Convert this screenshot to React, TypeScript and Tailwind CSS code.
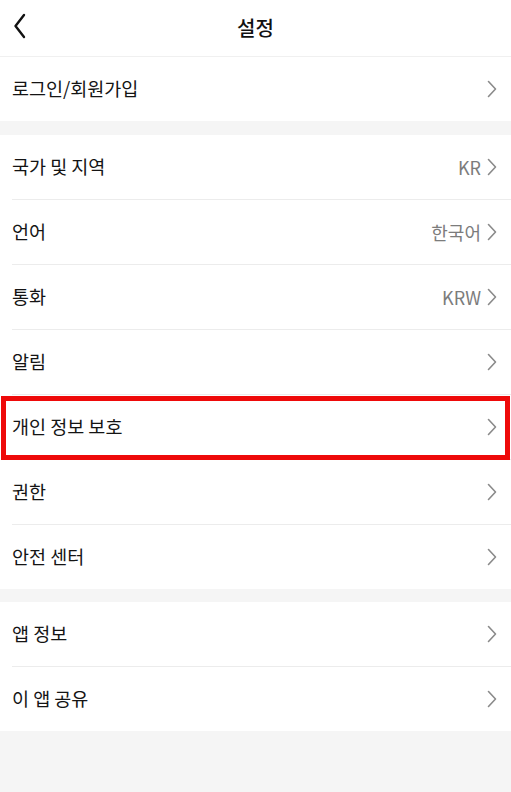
import React from "react"

type Item = { label: string; value?: string; highlight?: boolean }

const groupOne: Item[] = [{ label: "로그인/회원가입" }]
const groupTwo: Item[] = [
  { label: "국가 및 지역", value: "KR" },
  { label: "언어", value: "한국어" },
  { label: "통화", value: "KRW" },
  { label: "알림" },
  { label: "개인 정보 보호", highlight: true },
  { label: "권한" },
  { label: "안전 센터" },
]
const groupThree: Item[] = [{ label: "앱 정보" }, { label: "이 앱 공유" }]

function Chevron() {
  return (
    <svg width="10" height="18" viewBox="0 0 10 18" fill="none" className="shrink-0">
      <path d="M1.5 1.5 L8.5 9 L1.5 16.5" stroke="#8a8a8a" strokeWidth="1.6" strokeLinecap="round" strokeLinejoin="round" />
    </svg>
  )
}

function Row({ item, last }: { item: Item; last: boolean }) {
  return (
    <div className="relative pl-3">
      <div className={"flex items-center justify-between pr-[14px] " + (last ? "h-[64px]" : "h-[65px] border-b border-[#ececec]")}>
        <span className="text-[18.5px] text-[#141414]">{item.label}</span>
        <div className="flex items-center gap-[6px]">
          {item.value && <span className="text-[18px] text-[#7c7c7c]">{item.value}</span>}
          <Chevron />
        </div>
      </div>
      {item.highlight && (
        <div className="pointer-events-none absolute left-[1px] right-[1px] top-[1px] bottom-0 border-[5px] border-[#ee0a0a]" />
      )}
    </div>
  )
}

function Group({ items }: { items: Item[] }) {
  return (
    <div className="bg-white">
      {items.map((it, i) => (
        <Row key={it.label} item={it} last={i === items.length - 1} />
      ))}
    </div>
  )
}

export default function App() {
  return (
    <div
      className="min-h-[792px] bg-[#f5f5f5]"
      style={{ fontFamily: '"Noto Sans CJK KR", "Noto Sans", sans-serif' }}
    >
      <div className="relative flex h-[57px] items-center justify-center border-b border-[#f0f0f0] bg-white">
        <div className="absolute left-[13px] top-[13px]">
          <svg width="14" height="26" viewBox="0 0 14 26" fill="none">
            <path d="M11 2 L2.5 13 L11 24" stroke="#111" strokeWidth="2.4" strokeLinecap="round" strokeLinejoin="round" />
          </svg>
        </div>
        <span className="text-[20px] font-medium text-[#111]">설정</span>
      </div>
      <Group items={groupOne} />
      <div className="h-[14px]" />
      <Group items={groupTwo} />
      <div className="h-[13px]" />
      <Group items={groupThree} />
    </div>
  )
}
